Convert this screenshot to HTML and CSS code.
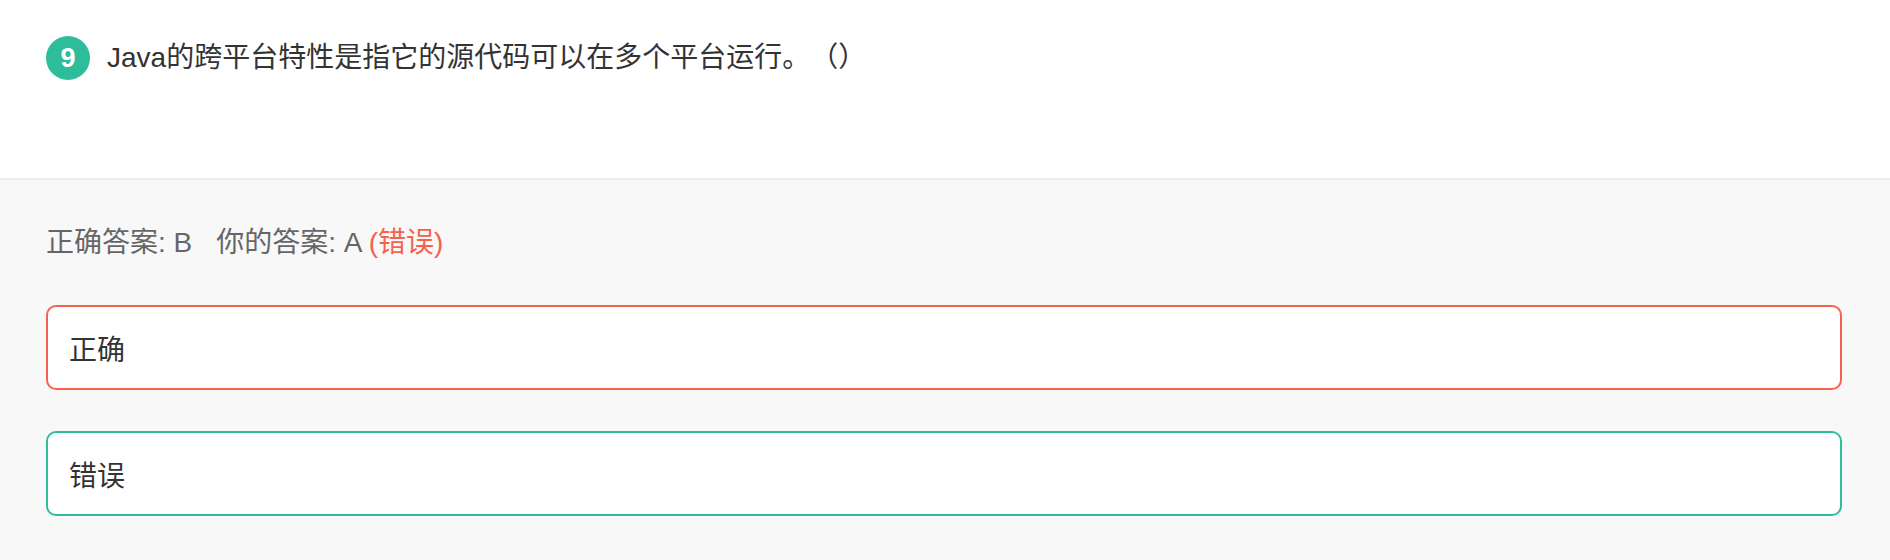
FILE: index.html
```html
<!DOCTYPE html>
<html lang="zh-CN">
<head>
<meta charset="utf-8">
<title>判断题</title>
<link rel="stylesheet" href="styles.css">
</head>
<body>
<div class="question">
  <span class="num">9</span>
  <span class="qtext">Java的跨平台特性是指它的源代码可以在多个平台运行。（）</span>
</div>
<div class="answers">
  <div class="result">正确答案: B<span class="mine">你的答案: A <span class="wrong">(错误)</span></span></div>
  <div class="option option-wrong">正确</div>
  <div class="option option-right">错误</div>
</div>
</body>
</html>
```
FILE: styles.css
```css
html, body {
  margin: 0;
  padding: 0;
  background: #f8f8f8;
  font-family: "Liberation Sans", "Noto Sans CJK SC", sans-serif;
  text-spacing-trim: space-all;
}
.question {
  height: 180px;
  box-sizing: border-box;
  padding: 36px 48px 0 46px;
  display: flex;
  align-items: flex-start;
  gap: 17px;
  background: #ffffff;
  border-bottom: 2px solid #ececec;
}
.num {
  width: 44px;
  height: 44px;
  border-radius: 50%;
  background: #2dbd9b;
  color: #ffffff;
  font-size: 27px;
  font-weight: bold;
  line-height: 44px;
  text-align: center;
  flex-shrink: 0;
}
.qtext {
  font-size: 28px;
  line-height: 44px;
  color: #333333;
  text-spacing-trim: space-all;
}
.answers {
  padding: 43px 48px 0 46px;
  display: flex;
  flex-direction: column;
  gap: 41px;
}
.result {
  font-size: 28px;
  line-height: 40px;
  color: #666666;
  margin-bottom: 1px;
}
.mine {
  margin-left: 24px;
}
.wrong {
  color: #f5614c;
}
.option {
  height: 85px;
  box-sizing: border-box;
  border: 2px solid #f5614c;
  border-radius: 10px;
  background: #ffffff;
  padding-left: 21px;
  display: flex;
  align-items: center;
  font-size: 28px;
  color: #333333;
}
.option-right {
  border-color: #2dbd9b;
}
```
